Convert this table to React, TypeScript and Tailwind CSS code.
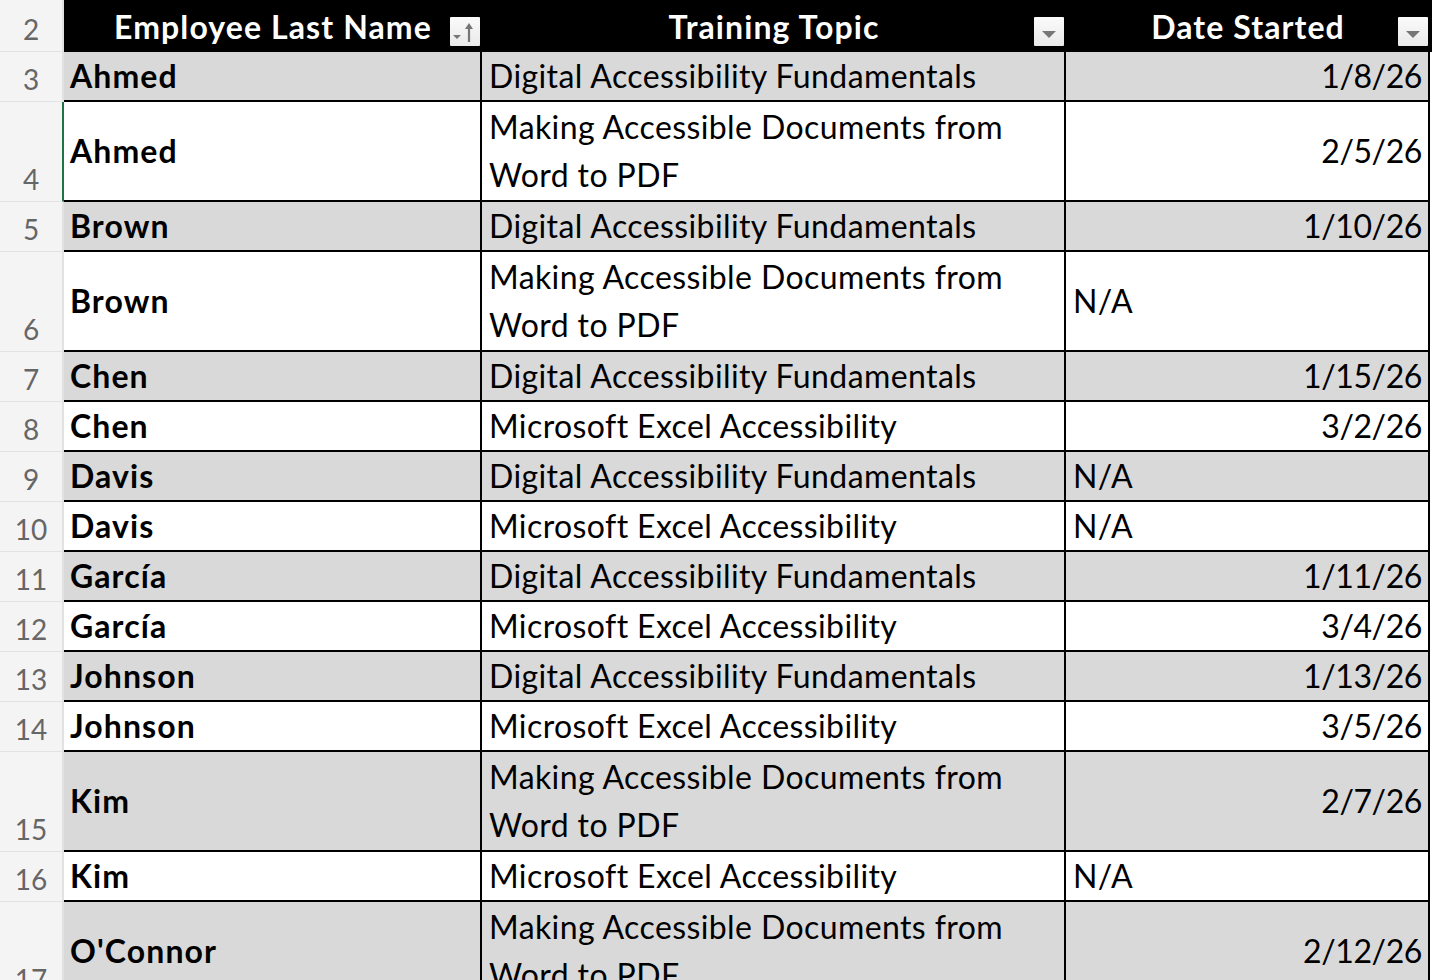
import React from 'react'

interface Row {
  n: number
  name: string
  topic: string[]
  date: string
}

const DAF = ['Digital Accessibility Fundamentals']
const MAD = ['Making Accessible Documents from', 'Word to PDF']
const MEA = ['Microsoft Excel Accessibility']

const ROWS: Row[] = [
  { n: 3, name: 'Ahmed', topic: DAF, date: '1/8/26' },
  { n: 4, name: 'Ahmed', topic: MAD, date: '2/5/26' },
  { n: 5, name: 'Brown', topic: DAF, date: '1/10/26' },
  { n: 6, name: 'Brown', topic: MAD, date: 'N/A' },
  { n: 7, name: 'Chen', topic: DAF, date: '1/15/26' },
  { n: 8, name: 'Chen', topic: MEA, date: '3/2/26' },
  { n: 9, name: 'Davis', topic: DAF, date: 'N/A' },
  { n: 10, name: 'Davis', topic: MEA, date: 'N/A' },
  { n: 11, name: 'García', topic: DAF, date: '1/11/26' },
  { n: 12, name: 'García', topic: MEA, date: '3/4/26' },
  { n: 13, name: 'Johnson', topic: DAF, date: '1/13/26' },
  { n: 14, name: 'Johnson', topic: MEA, date: '3/5/26' },
  { n: 15, name: 'Kim', topic: MAD, date: '2/7/26' },
  { n: 16, name: 'Kim', topic: MEA, date: 'N/A' },
  { n: 17, name: "O'Connor", topic: MAD, date: '2/12/26' },
]

const SELECTED = 4

function FilterButton({ sorted }: { sorted?: boolean }) {
  return (
    <div className="absolute right-[2px] bottom-[6px] w-[30px] h-[29px] bg-gradient-to-b from-[#fbfbfb] to-[#e9e9e9] rounded-[1px]">
      {sorted ? (
        <svg width="30" height="29" viewBox="0 0 30 29">
          <path d="M3 18 L11 18 L7 22 Z" fill="#767676" />
          <path d="M19 25 L19 8" stroke="#767676" strokeWidth="2.2" />
          <path d="M15 12 L19 6 L23 12 Z" fill="#767676" />
        </svg>
      ) : (
        <svg width="30" height="29" viewBox="0 0 30 29">
          <path d="M8 14 L22 14 L15 21 Z" fill="#767676" />
        </svg>
      )}
    </div>
  )
}

export default function App() {
  const font = { fontFamily: 'Lato, "Liberation Sans", sans-serif' }
  const rowHead = 'w-[64px] shrink-0 bg-[#f4f4f4] border-r-2 border-[#c9c9c9] flex items-end justify-center text-[28px] leading-none text-[#666666] pb-[8px] tracking-normal font-normal'
  const head = 'relative shrink-0 bg-black text-white font-bold text-[32px] tracking-[1.1px] flex items-center justify-center pt-[2px]'

  return (
    <div className="w-[1432px] h-[980px] overflow-hidden bg-white text-black" style={font}>
      {/* Header row */}
      <div className="flex h-[52px]">
        <div className={`${rowHead} border-b border-[#e2e2e2]`}>2</div>
        <div className={`${head} w-[418px]`}>
          Employee Last Name
          <FilterButton sorted />
        </div>
        <div className={`${head} w-[584px]`}>
          Training Topic
          <FilterButton />
        </div>
        <div className={`${head} w-[364px]`}>
          Date Started
          <FilterButton />
        </div>
        <div className="flex-1 bg-black" />
      </div>

      {ROWS.map(r => {
        const tall = r.topic.length > 1
        const band = r.n % 2 === 1 ? 'bg-[#d9d9d9]' : 'bg-white'
        const isNA = r.date === 'N/A'
        const selected = r.n === SELECTED
        return (
          <div key={r.n} className={`flex ${tall ? 'h-[100px]' : 'h-[50px]'}`}>
            <div className={`${rowHead} border-b border-[#e2e2e2] ${selected ? 'text-[#217346] !border-r-[#217346]' : ''}`}>{r.n}</div>
            <div className={`w-[418px] shrink-0 ${band} border-r-2 border-b-2 border-black flex items-center pl-[6px] font-bold text-[32px] tracking-[1.1px]`}>
              {r.name}
            </div>
            <div className={`w-[584px] shrink-0 ${band} border-r-2 border-b-2 border-black flex flex-col justify-center pl-[7px] text-[32px] tracking-[0.4px] leading-[48px]`}>
              {r.topic.map(t => <div key={t}>{t}</div>)}
            </div>
            <div className={`w-[364px] shrink-0 ${band} border-r-2 border-b-2 border-black flex items-center text-[32px] ${isNA ? 'pl-[7px] tracking-[0.4px]' : 'justify-end pr-[6px] tracking-[-0.4px]'}`}>
              {r.date}
            </div>
            <div className="flex-1 bg-white" />
          </div>
        )
      })}
    </div>
  )
}
